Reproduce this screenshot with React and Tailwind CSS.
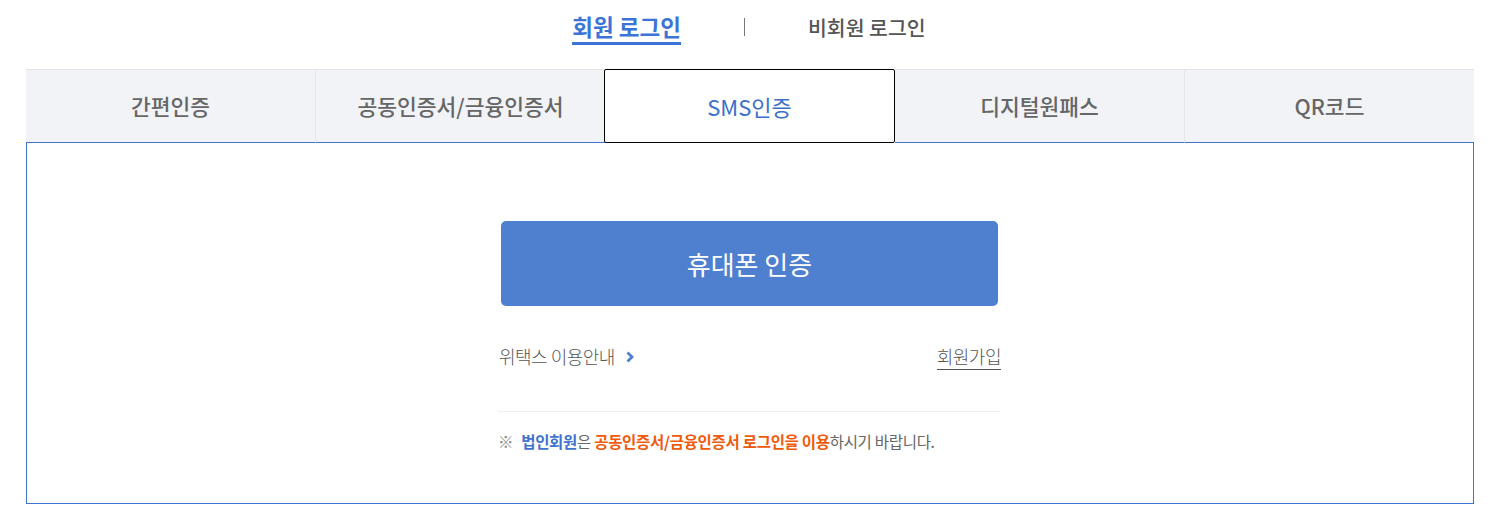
import { useState } from "react";

const tabs = ["간편인증", "공동인증서/금융인증서", "SMS인증", "디지털원패스", "QR코드"];

const App = () => {
  const [active, setActive] = useState(2);

  return (
    <div className="w-[1495px] h-[520px] bg-white font-['Noto_Sans_CJK_KR','Noto_Sans',sans-serif]">
      {/* top login switch */}
      <div className="flex items-center justify-center h-[52px] pt-[2px] pl-[3px]">
        <a className="text-[22.5px] font-bold text-[#3b74d6] border-b-[3px] border-[#3b74d6] leading-[30px] pb-[1px] mt-[1px]">
          회원 로그인
        </a>
        <span className="mx-[63px] w-px h-[18px] bg-[#777]" />
        <a className="text-[20.5px] font-medium text-[#555] leading-[30px]">
          비회원 로그인
        </a>
      </div>

      <div className="w-[1448px] ml-[26px] pt-[17px]">
        {/* tabs */}
        <div className="flex h-[74px]">
          {tabs.map((t, i) => (
            <button
              key={t}
              onClick={() => setActive(i)}
              className={
                i === active
                  ? "flex-1 flex items-center justify-center bg-white border-[1.5px] border-black rounded-[2px] text-[22px] text-[#3b6fc9] pt-[1px] -ml-[2px]"
                  : "flex-1 flex items-center justify-center bg-[#f1f3f7] border-t border-[#e3e3e3] border-r border-r-[#e4e6ea] last:border-r-0 text-[21.5px] font-medium text-[#666] border-b border-b-[#3f73cd] pt-[1px]"
              }
            >
              {t}
            </button>
          ))}
        </div>

        {/* panel */}
        <div className="h-[361px] border border-t-0 border-[#3f73cd] flex justify-center">
          <div className="w-[502px] pt-[78px] -ml-[2px]">
            <button className="w-[497px] ml-[3px] h-[85px] rounded-[5px] bg-[#4f80cf] text-white text-[26px] leading-none">
              휴대폰 인증
            </button>

            <div className="flex justify-between items-center mt-[37px] pl-[1px]">
              <a className="flex items-center text-[18px] font-light text-[#555] tracking-[-0.5px]">
                위택스 이용안내
                <svg className="ml-[10px] mt-[1px]" width="10" height="12" viewBox="0 0 10 12">
                  <path d="M2.5 1.5 L7 6 L2.5 10.5" fill="none" stroke="#4f80cf" strokeWidth="2.8" />
                </svg>
              </a>
              <a className="text-[18px] font-light text-[#555] border-b border-[#555] leading-[25px] tracking-[-0.5px] mr-[-1px]">
                회원가입
              </a>
            </div>

            <div className="mt-[41px] border-t border-[#eeeeee]" />

            <p className="mt-[18px] text-[15.5px] text-[#666] tracking-[-0.3px]">
              <span className="text-[#888] mr-[8px]">※</span>
              <b className="text-[#3f73cd] font-bold">법인회원</b>은{" "}
              <b className="text-[#f05a0a] font-bold">공동인증서/금융인증서 로그인을 이용</b>하시기 바랍니다.
            </p>
          </div>
        </div>
      </div>
    </div>
  );
};

export default App;
